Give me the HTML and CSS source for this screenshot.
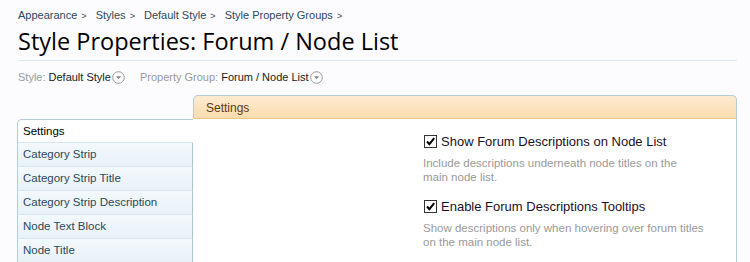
FILE: index.html
```html
<!DOCTYPE html>
<html>
<head>
  <meta charset="utf-8">
  <title>Style Properties: Forum / Node List</title>
  <link rel="stylesheet" href="styles.css">
</head>
<body>
  <div class="breadcrumb">
    <a href="#">Appearance</a><span class="sep">&gt;</span>
    <a href="#">Styles</a><span class="sep">&gt;</span>
    <a href="#">Default Style</a><span class="sep">&gt;</span>
    <a href="#">Style Property Groups</a><span class="sep">&gt;</span>
  </div>
  <h1>Style Properties: Forum / Node List</h1>

  <div class="filters">
    <span class="filter"><span class="muted">Style:</span> Default Style<svg class="drop" width="13" height="13" viewBox="0 0 13 13"><circle cx="6.5" cy="6.5" r="5.8" fill="#fff" stroke="#999"/><path d="M3.8 5.2h5.4L6.5 8.2z" fill="#888"/></svg></span>
    <span class="filter"><span class="muted">Property Group:</span> Forum / Node List<svg class="drop" width="13" height="13" viewBox="0 0 13 13"><circle cx="6.5" cy="6.5" r="5.8" fill="#fff" stroke="#999"/><path d="M3.8 5.2h5.4L6.5 8.2z" fill="#888"/></svg></span>
  </div>

  <div class="tabs">
    <div class="tab-head">Settings</div>
    <div class="tab-body">
      <ul class="side">
        <li class="active">Settings</li>
        <li>Category Strip</li>
        <li>Category Strip Title</li>
        <li>Category Strip Description</li>
        <li>Node Text Block</li>
        <li>Node Title</li>
      </ul>
      <div class="panel">
        <div class="option">
          <label><span class="check"><svg width="11" height="11" viewBox="0 0 11 11"><path d="M2 5.5l2.4 2.6L9.2 2.2" fill="none" stroke="#000" stroke-width="2"/></svg></span>Show Forum Descriptions on Node List</label>
          <p class="hint">Include descriptions underneath node titles on the<br>main node list.</p>
        </div>
        <div class="option">
          <label><span class="check"><svg width="11" height="11" viewBox="0 0 11 11"><path d="M2 5.5l2.4 2.6L9.2 2.2" fill="none" stroke="#000" stroke-width="2"/></svg></span>Enable Forum Descriptions Tooltips</label>
          <p class="hint">Show descriptions only when hovering over forum titles<br>on the main node list.</p>
        </div>
      </div>
    </div>
  </div>
</body>
</html>
```

FILE: styles.css
```css
* {
  box-sizing: border-box;
}

body {
  margin: 0;
  background: #fcfcfe;
  font-family: "Liberation Sans", Arial, sans-serif;
  font-size: 11px;
  color: #000;
  overflow: hidden;
}

.breadcrumb {
  padding: 8px 0 0 18px;
  height: 22px;
  line-height: 14px;
}

.breadcrumb a {
  color: #2b485c;
  text-decoration: none;
}

.breadcrumb .sep {
  color: #2b485c;
  font-size: 9px;
  margin: 0 6px 0 4px;
}

h1 {
  margin: 0 13px 0 18px;
  font-family: "Open Sans", sans-serif;
  font-weight: normal;
  font-size: 23.5px;
  line-height: 38px;
  color: #000;
  border-bottom: 1px solid #dce8ee;
}

.filters {
  padding: 9px 0 0 18px;
  height: 34px;
  color: #1a1a1a;
  display: flex;
  gap: 15px;
}

.filter {
  display: flex;
  align-items: center;
  height: 14px;
}

.muted {
  color: #999;
  margin-right: 3px;
}

.drop {
  margin-left: 1px;
}

.tabs {
  margin: 0 13px 0 17px;
}

.tab-head {
  margin-left: 176px;
  height: 24px;
  padding: 5px 0 0 12px;
  font-size: 12px;
  color: #5c3b12;
  background: linear-gradient(#fdebd0, #fbdcae);
  border: 1px solid #b3ccd5;
  border-bottom: 1px solid #f0c887;
  border-radius: 5px 5px 0 0;
}

.tab-body {
  display: flex;
}

.side {
  list-style: none;
  margin: 0;
  padding: 0;
  width: 176px;
  border-top: 1px solid #b3ccd5;
  border-left: 1px solid #b3ccd5;
  border-radius: 5px 0 0 0;
  background: #fff;
}

.side li {
  height: 24px;
  line-height: 23px;
  padding-left: 5px;
  font-size: 11.5px;
  color: #2b485c;
  background: linear-gradient(#f3f9fc, #e7f2f8);
  border-bottom: 1px solid #d6e7ef;
  border-right: 1px solid #a9c6d2;
}

.side li.active {
  height: 23px;
  color: #000;
  background: #fff;
  border-right: none;
  border-radius: 5px 0 0 0;
}

.panel {
  flex: 1;
  background: #fff;
  border-right: 1px solid #b3ccd5;
  padding: 13px 0 0 230px;
  height: 160px;
}

.option {
  margin-bottom: 13px;
}

.option label {
  display: flex;
  align-items: center;
  font-size: 13px;
  color: #1c1028;
  height: 18px;
}

.check {
  width: 13px;
  height: 13px;
  border: 1px solid #333;
  background: #fff;
  margin: 0 4px 0 1px;
  display: flex;
  align-items: center;
  justify-content: center;
}

.hint {
  margin: 6px 0 0;
  font-size: 11.5px;
  color: #999;
  line-height: 14px;
}
```
